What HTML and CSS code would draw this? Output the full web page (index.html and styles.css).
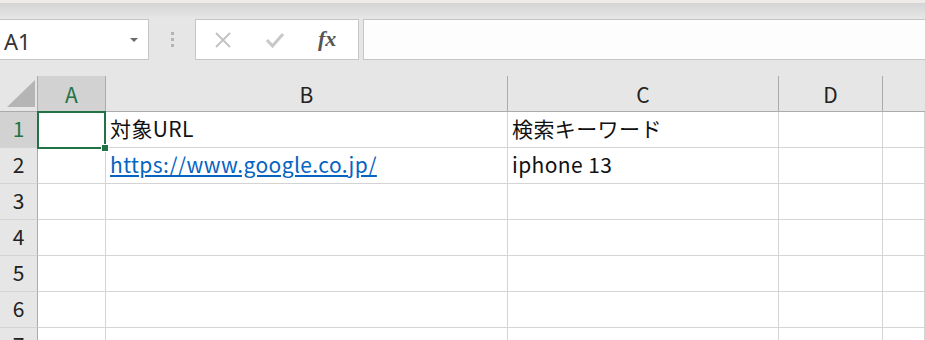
FILE: index.html
```html
<html>
<head>
<link rel="stylesheet" href="styles.css">
</head>
<body>
<div class="app">
  <div class="topbar"></div>

  <!-- name box + formula bar -->
  <div class="formula-row">
    <div class="namebox">
      <span class="namebox-text">A1</span>
      <span class="namebox-arrow"></span>
    </div>
    <div class="grip">
      <span></span><span></span><span></span>
    </div>
    <div class="fbuttons">
      <svg class="ficon cross" width="18" height="18" viewBox="0 0 18 18">
        <path d="M2 2 L16 16 M16 2 L2 16" stroke="#c3c3c3" stroke-width="2" fill="none"/>
      </svg>
      <svg class="ficon check" width="20" height="18" viewBox="0 0 20 18">
        <path d="M2 9 L7.5 15 L18 3" stroke="#c8c8c8" stroke-width="3" fill="none"/>
      </svg>
      <span class="fx">fx</span>
    </div>
    <div class="finput"></div>
  </div>

  <div class="gap"></div>

  <!-- sheet grid -->
  <div class="sheet">
    <div class="corner"><span class="corner-tri"></span></div>
    <div class="colhdr selected">A</div>
    <div class="colhdr">B</div>
    <div class="colhdr">C</div>
    <div class="colhdr">D</div>
    <div class="colhdr last"></div>

    <div class="rowhdr selected">1</div>
    <div class="cell active"><span class="fill-handle"></span></div>
    <div class="cell">対象URL</div>
    <div class="cell">検索キーワード</div>
    <div class="cell"></div>
    <div class="cell"></div>

    <div class="rowhdr">2</div>
    <div class="cell"></div>
    <div class="cell"><a class="link" href="#">https://www.google.co.jp/</a></div>
    <div class="cell">iphone 13</div>
    <div class="cell"></div>
    <div class="cell"></div>

    <div class="rowhdr">3</div>
    <div class="cell"></div><div class="cell"></div><div class="cell"></div><div class="cell"></div><div class="cell"></div>

    <div class="rowhdr">4</div>
    <div class="cell"></div><div class="cell"></div><div class="cell"></div><div class="cell"></div><div class="cell"></div>

    <div class="rowhdr">5</div>
    <div class="cell"></div><div class="cell"></div><div class="cell"></div><div class="cell"></div><div class="cell"></div>

    <div class="rowhdr">6</div>
    <div class="cell"></div><div class="cell"></div><div class="cell"></div><div class="cell"></div><div class="cell"></div>

    <div class="rowhdr">7</div>
    <div class="cell"></div><div class="cell"></div><div class="cell"></div><div class="cell"></div><div class="cell"></div>
  </div>
</div>
</body>
</html>
```

FILE: styles.css
```css
/* page reset */
body {
  margin: 0;
  background: #ffffff;
  font-family: "Noto Sans CJK JP", "Noto Sans", sans-serif;
  overflow: hidden;
}

.app {
  width: 925px;
  height: 340px;
  overflow: hidden;
}

/* thin ribbon edge at the very top */
.topbar {
  height: 19px;
  background: linear-gradient(#eeebe9 0, #eeebe9 3px, #d4d4d4 3px, #e6e6e6 18px);
}

/* name box + formula bar row */
.formula-row {
  display: flex;
  height: 41px;
  background: #e6e6e6;
}

.namebox {
  width: 148px;
  height: 39px;
  background: #ffffff;
  border: 1px solid #c6c6c6;
  border-left: none;
  display: flex;
  align-items: center;
  justify-content: space-between;
}

.namebox-text {
  font-family: "Noto Sans", sans-serif;
  font-size: 22px;
  color: #333333;
  padding-left: 4px;
  margin-top: 2px;
}

.namebox-arrow {
  width: 0;
  height: 0;
  border-left: 4px solid transparent;
  border-right: 4px solid transparent;
  border-top: 4px solid #6b6b6b;
  margin-right: 10px;
}

.grip {
  width: 46px;
  display: flex;
  flex-direction: column;
  align-items: center;
  justify-content: center;
  gap: 3px;
}

.grip span {
  width: 3px;
  height: 3px;
  background: #b4b4b4;
}

.fbuttons {
  width: 164px;
  height: 41px;
  box-sizing: border-box;
  background: #ffffff;
  border: 1px solid #c6c6c6;
  display: flex;
  align-items: center;
  padding-left: 18px;
}

.cross {
  margin-right: 33px;
}

.check {
  margin-right: 33px;
}

.fx {
  font-family: "Liberation Serif", serif;
  font-style: italic;
  font-weight: bold;
  font-size: 22px;
  line-height: 22px;
  color: #555555;
  margin-top: -2px;
}

.finput {
  flex: 1;
  height: 39px;
  margin-left: 4px;
  background: #fdfdfd;
  border: 1px solid #c6c6c6;
  border-right: none;
}

.gap {
  height: 16px;
  background: #e6e6e6;
}

/* the spreadsheet grid */
.sheet {
  display: grid;
  grid-template-columns: 38px 68px 402px 271px 104px 42px;
  grid-template-rows: 36px repeat(7, 36px);
}

.corner {
  background: #e6e6e6;
  border-bottom: 1px solid #ababab;
  border-right: 1px solid #ababab;
  position: relative;
}

.corner-tri {
  position: absolute;
  left: 7px;
  top: 4px;
  width: 0;
  height: 0;
  border-left: 28px solid transparent;
  border-bottom: 27px solid #b5b5b5;
}

.colhdr {
  background: #e6e6e6;
  border-right: 1px solid #ababab;
  border-bottom: 1px solid #ababab;
  font-size: 21px;
  color: #222222;
  display: flex;
  align-items: center;
  justify-content: center;
}

.colhdr.last {
  border-right: none;
}

.colhdr.selected {
  background: #d2d2d2;
  color: #217346;
}

.rowhdr {
  background: #e6e6e6;
  border-right: 1px solid #ababab;
  border-bottom: 1px solid #d4d4d4;
  font-size: 21px;
  color: #222222;
  display: flex;
  align-items: center;
  justify-content: center;
  padding-bottom: 3px;
}

.rowhdr.selected {
  background: #d2d2d2;
  color: #217346;
}

.cell {
  border-right: 1px solid #d4d4d4;
  border-bottom: 1px solid #d4d4d4;
  font-size: 21px;
  color: #111111;
  padding-left: 4px;
  padding-bottom: 4px;
  display: flex;
  align-items: center;
  white-space: nowrap;
  overflow: visible;
  letter-spacing: 0.4px;
}

.cell.active {
  position: relative;
  border: 2px solid #217346;
  margin: -1px 0 -1px -1px;
  padding-bottom: 0;
}

.fill-handle {
  position: absolute;
  right: -5px;
  bottom: -5px;
  width: 6px;
  height: 6px;
  background: #217346;
  border: 1px solid #ffffff;
}

.link {
  color: #0563c1;
  text-decoration: underline;
}
```
